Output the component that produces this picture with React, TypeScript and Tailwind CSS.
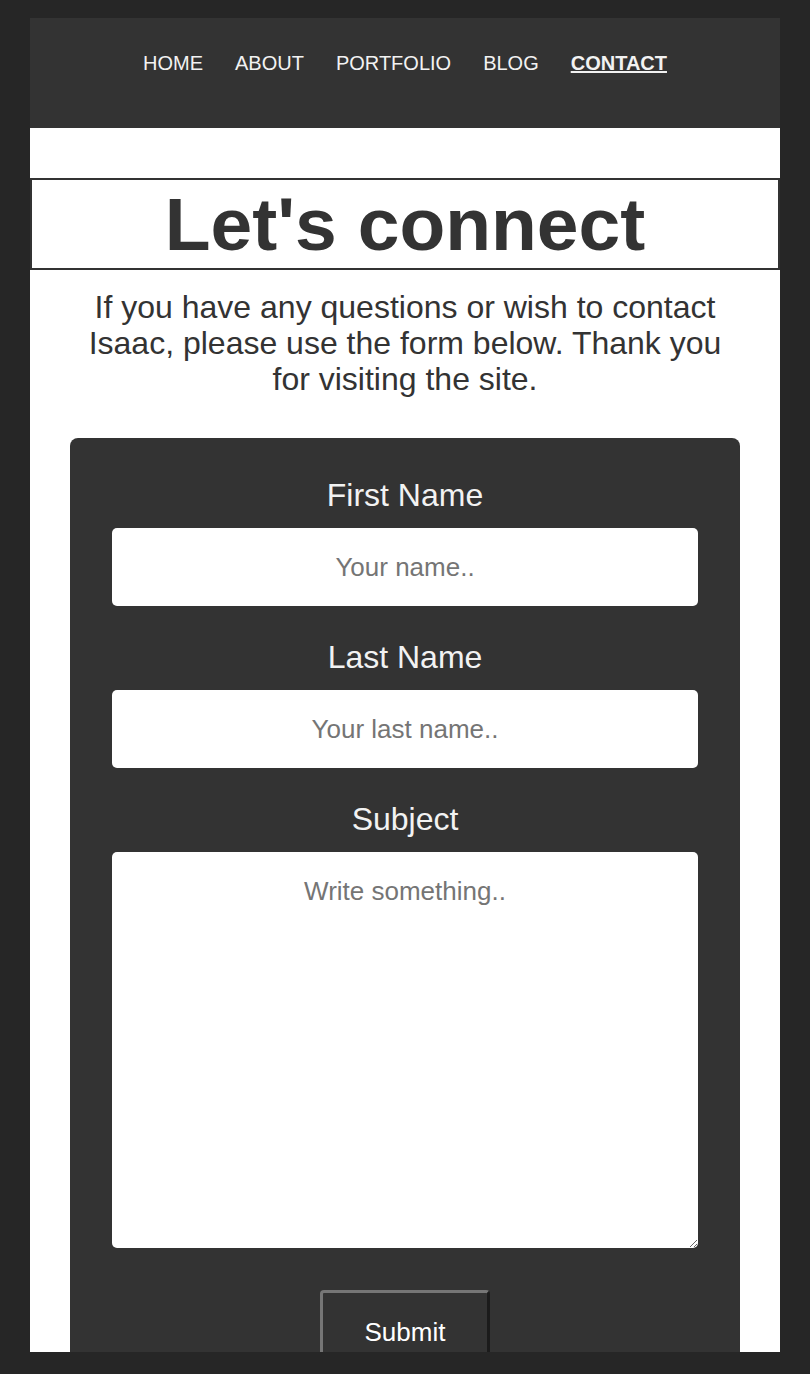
import React from "react";

export default function App() {
  const links = ["HOME", "ABOUT", "PORTFOLIO", "BLOG"];
  return (
    <div className="h-[1374px] bg-[#262626] px-[30px] pt-[18px] pb-[22px] font-['Liberation_Sans',Arial,sans-serif]">
      <div className="h-full overflow-hidden bg-white">
        <nav className="flex h-[110px] items-start justify-center gap-[32px] bg-[#333333] pt-[34px] text-[20px] leading-[23px] text-[#f2f2f2]">
          {links.map((l) => (
            <a key={l} href="#" className="block">
              {l}
            </a>
          ))}
          <a href="#" className="block font-bold underline">
            CONTACT
          </a>
        </nav>
        <div className="mt-[50px] flex h-[92px] items-center justify-center border-2 border-[#333333]">
          <h1 className="text-[75px] font-bold leading-[86px] text-[#333333]">Let's connect</h1>
        </div>
        <p className="mx-auto mt-[19px] w-[650px] text-center text-[32px] leading-[36px] text-[#333333]">
          If you have any questions or wish to contact Isaac, please use the form below. Thank you for visiting the site.
        </p>
        <form className="mx-[40px] mt-[41px] rounded-[8px] bg-[#333333] px-[42px] pt-[39px] pb-[40px]">
          <label className="block text-center text-[32px] leading-[36px] text-[#f2f2f2]">First Name</label>
          <input
            className="mt-[15px] block h-[78px] w-full rounded-[5px] bg-white text-center text-[26px] text-[#333] outline-none placeholder:text-[#757575]"
            placeholder="Your name.."
          />
          <label className="mt-[33px] block text-center text-[32px] leading-[36px] text-[#f2f2f2]">Last Name</label>
          <input
            className="mt-[15px] block h-[78px] w-full rounded-[5px] bg-white text-center text-[26px] text-[#333] outline-none placeholder:text-[#757575]"
            placeholder="Your last name.."
          />
          <label className="mt-[33px] block text-center text-[32px] leading-[36px] text-[#f2f2f2]">Subject</label>
          <textarea
            className="mt-[15px] block h-[396px] w-full rounded-[5px] bg-white pt-[24px] text-center text-[26px] leading-[30px] text-[#333] outline-none placeholder:text-[#757575]"
            placeholder="Write something.."
          />
          <div className="mt-[42px] flex justify-center">
            <button
              type="button"
              className="rounded-[4px] border-[3px] border-t-[#767676] border-l-[#767676] border-r-[#1b1b1b] border-b-[#1b1b1b] bg-[#333333] px-[42px] py-[24px] text-[26px] leading-[30px] text-white"
            >
              Submit
            </button>
          </div>
        </form>
      </div>
    </div>
  );
}
